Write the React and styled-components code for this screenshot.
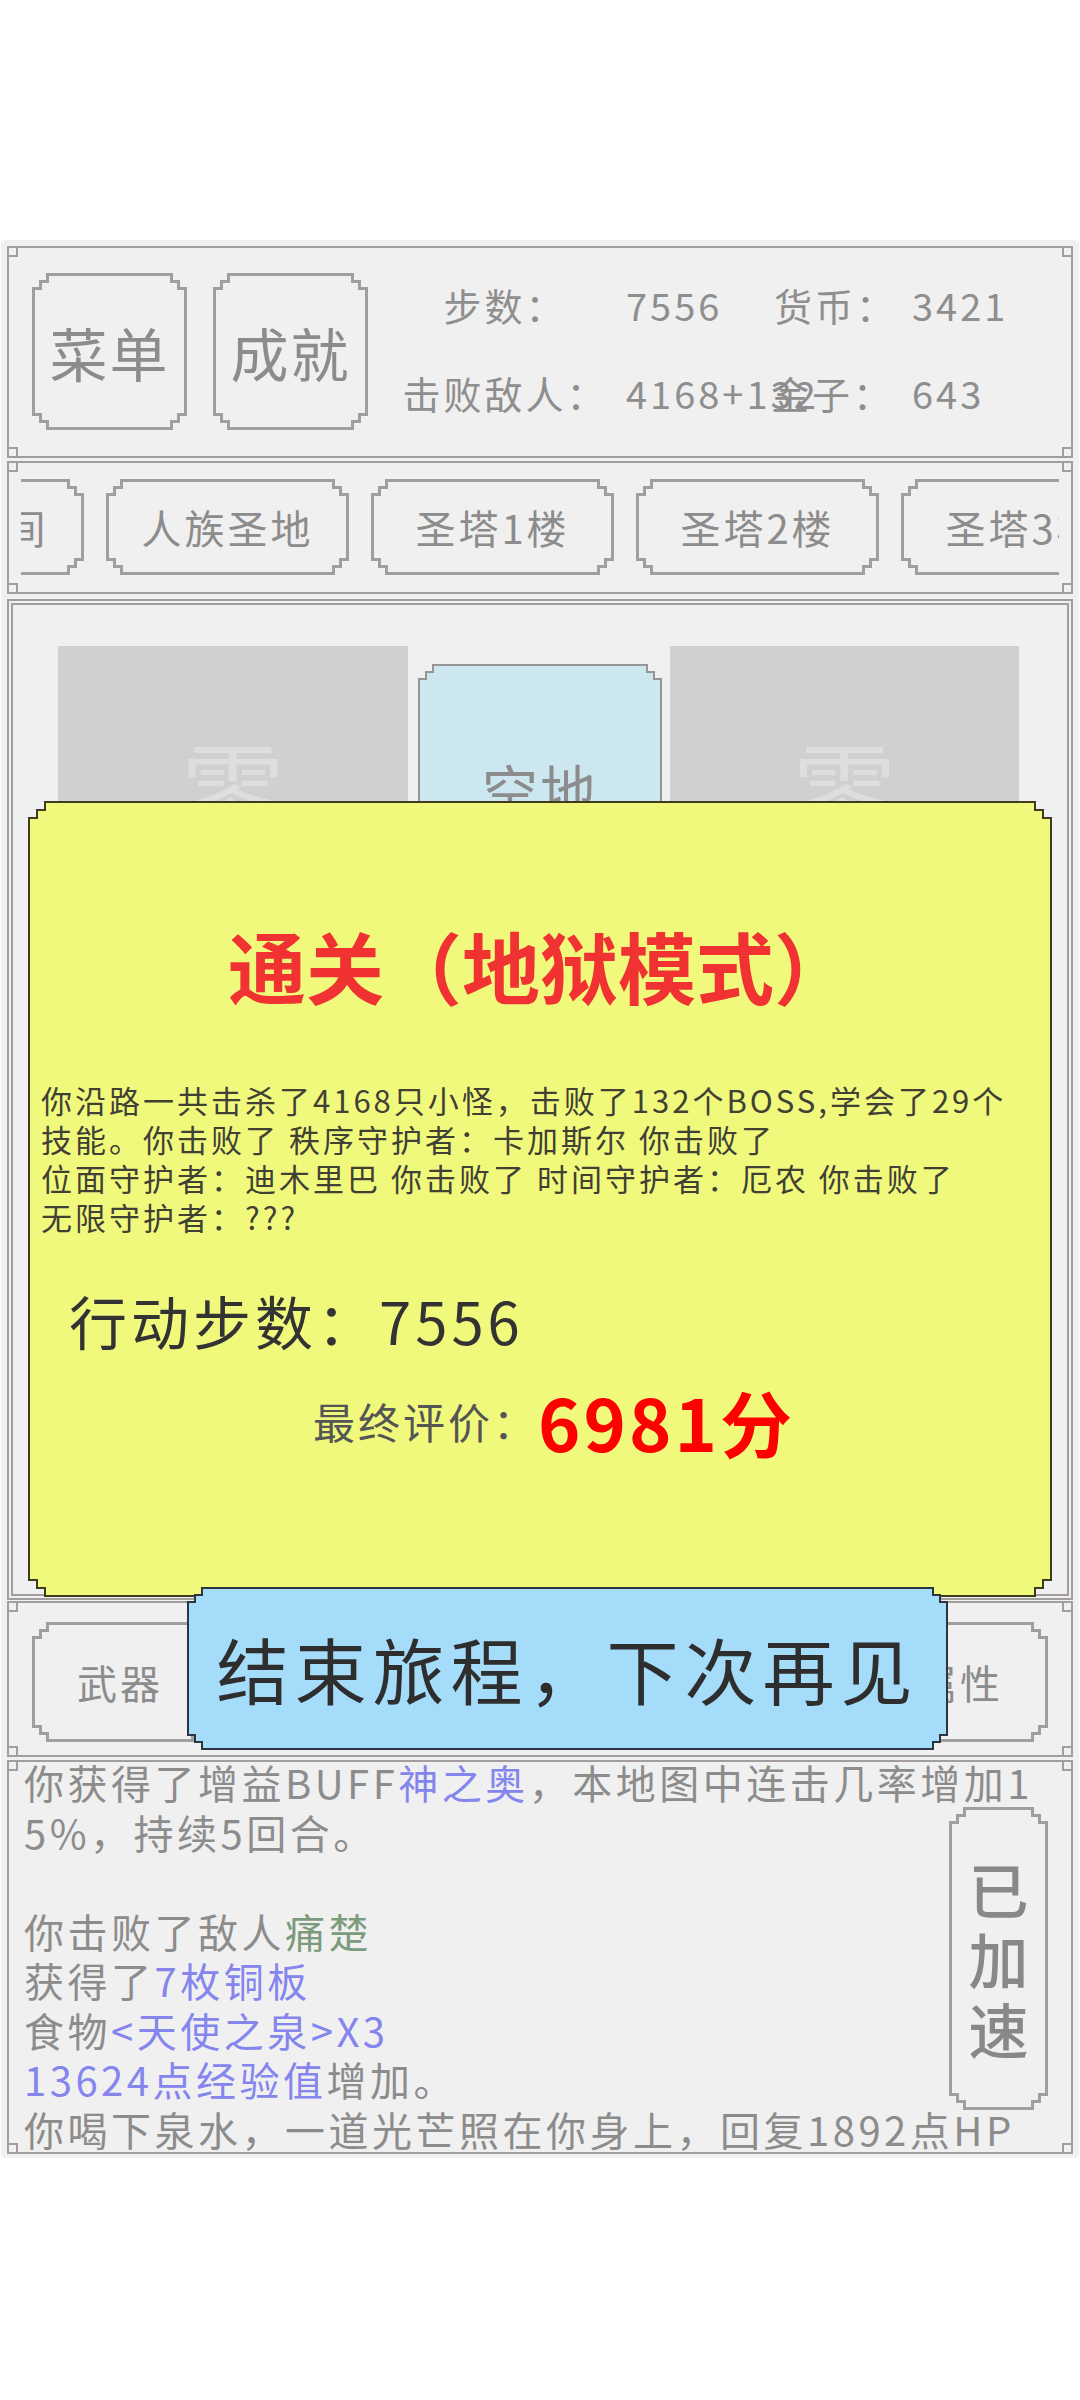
import React from "react";
import styled, { createGlobalStyle } from "styled-components";

const LINE = "#a29e9e";
const BG = "#f0f0f0";
const TEXT = "#8c8c8c";

const GlobalStyle = createGlobalStyle`
  html, body { margin: 0; padding: 0; background: #fff; }
  body { font-family: "Noto Sans CJK SC", "Noto Sans", sans-serif; }
  * { box-sizing: border-box; }
`;

// stepped corner outline, two steps of s px
const steps = (s) => `polygon(
  0 ${2 * s}px, ${s}px ${2 * s}px, ${s}px ${s}px, ${2 * s}px ${s}px, ${2 * s}px 0,
  calc(100% - ${2 * s}px) 0, calc(100% - ${2 * s}px) ${s}px, calc(100% - ${s}px) ${s}px, calc(100% - ${s}px) ${2 * s}px, 100% ${2 * s}px,
  100% calc(100% - ${2 * s}px), calc(100% - ${s}px) calc(100% - ${2 * s}px), calc(100% - ${s}px) calc(100% - ${s}px), calc(100% - ${2 * s}px) calc(100% - ${s}px), calc(100% - ${2 * s}px) 100%,
  ${2 * s}px 100%, ${2 * s}px calc(100% - ${s}px), ${s}px calc(100% - ${s}px), ${s}px calc(100% - ${2 * s}px), 0 calc(100% - ${2 * s}px)
)`;

const Notch = styled.div`
  flex: none;
  width: ${(p) => p.$w}px;
  height: ${(p) => p.$h}px;
  margin-top: ${(p) => p.$mt || 0}px;
  padding: ${(p) => p.$bw}px;
  background: ${(p) => p.$line};
  clip-path: ${(p) => steps(p.$s)};
`;

const NotchFill = styled.div`
  height: 100%;
  background: ${(p) => p.$fill};
  clip-path: ${(p) => steps(p.$s)};
`;

const CenterFace = styled(NotchFill)`
  display: flex;
  align-items: center;
  justify-content: center;
  white-space: nowrap;
  color: ${TEXT};
  font-size: ${(p) => p.$fs || 40}px;
  letter-spacing: ${(p) => p.$ls ?? 3}px;
`;

const NotchBox = ({ w, h, s = 7, bw = 3, line = LINE, fill = BG, mt, Face = CenterFace, fs, ls, children }) => (
  <Notch $w={w} $h={h} $s={s} $bw={bw} $line={line} $mt={mt}>
    <Face $s={s} $fill={fill} $fs={fs} $ls={ls}>
      {children}
    </Face>
  </Notch>
);

const Page = styled.div`
  position: relative;
  margin: 240px 1px 0;
  background: ${BG};
  border-radius: 4px;
  padding: 6px 6px 4px;
  display: flex;
  flex-direction: column;
`;

const Panel = styled.section`
  position: relative;
  flex: none;
  height: ${(p) => p.$h}px;
  margin-top: ${(p) => p.$mt || 0}px;
  border: 2px solid ${LINE};
`;

const Corner = styled.span`
  position: absolute;
  width: 11px;
  height: 11px;
  border: 2px solid ${LINE};
  ${(p) => (p.$top ? "top: -2px;" : "bottom: -2px;")}
  ${(p) => (p.$left ? "left: -2px;" : "right: -2px;")}
`;

const Corners = () => (
  <>
    <Corner $top $left />
    <Corner $top />
    <Corner $left />
    <Corner />
  </>
);

/* top bar */
const TopBar = styled.div`
  display: flex;
  align-items: flex-start;
  gap: 26px;
  padding: 25px 0 0 23px;
`;

const Stats = styled.div`
  display: grid;
  grid-template-columns: 220px 156px 141px auto;
  grid-auto-rows: 50px;
  row-gap: 38px;
  margin: 7px 0 0 1px;
  font-size: 38px;
  letter-spacing: 3px;
  line-height: 50px;
  color: #8e8e8e;
  white-space: nowrap;
`;

const StatCell = styled.span`
  text-align: ${(p) => (p.$center ? "center" : "left")};
  padding-left: ${(p) => p.$pl || 0}px;
`;

/* map tabs */
const TabStrip = styled.div`
  margin: 16px 12px 0;
  height: 96px;
  overflow: hidden;
`;

const TabTrack = styled.div`
  display: flex;
  gap: 22px;
  margin-left: -180px;
`;

/* map area */
const MapPanel = styled(Panel)`
  overflow: hidden;
  box-shadow: inset 0 0 0 2px ${BG}, inset 0 0 0 4px ${LINE};
`;

const MapRow = styled.div`
  display: flex;
  align-items: flex-start;
  padding: 45px 0 0 49px;
`;

const FogTile = styled.div`
  flex: none;
  width: ${(p) => p.$w}px;
  height: 300px;
  margin-right: ${(p) => p.$mr || 0}px;
  background: #d0d0d0;
  color: #dedede;
  font-size: 105px;
  display: flex;
  align-items: center;
  justify-content: center;
  padding-bottom: 22px;
`;

const TileGap = styled.div`
  flex: none;
  width: ${(p) => p.$w}px;
`;

/* gear row */
const GearRow = styled.div`
  display: flex;
  justify-content: space-between;
  padding: 19px 23px 0;
`;

/* log */
const LogText = styled.div`
  height: 100%;
  overflow: hidden;
  padding-left: 15px;
`;

const LogLines = styled.div`
  margin-top: -4px;
  font-size: 40px;
  letter-spacing: 3.5px;
  line-height: 49.5px;
  color: ${TEXT};
  white-space: nowrap;
`;

const Hl = styled.span`
  color: ${(p) => (p.$green ? "#7c9b7c" : "#8585ee")};
`;

const SpeedSpot = styled.div`
  position: absolute;
  top: 45px;
  right: 23px;
`;

const VerticalFace = styled(CenterFace)`
  flex-direction: column;
  line-height: 70px;
  font-size: 60px;
  font-weight: 500;
  color: #888;
  padding-bottom: 2px;
`;

/* overlay dialog */
const DialogSpot = styled.div`
  position: absolute;
  top: ${(p) => p.$top}px;
  left: ${(p) => p.$left}px;
`;

const DialogFace = styled(NotchFill)`
  padding-top: 112px;
  display: flex;
  flex-direction: column;
`;

const Title = styled.h1`
  margin: 0;
  font-size: 78px;
  font-weight: 700;
  line-height: 100px;
  text-align: center;
  color: #f03232;
`;

const Summary = styled.p`
  margin: 65px 0 0;
  padding: 0 11px;
  font-size: 31px;
  letter-spacing: 3px;
  line-height: 39px;
  color: #404035;
  white-space: nowrap;
`;

const StepsLine = styled.div`
  margin-top: 49px;
  padding-left: 39px;
  font-size: 58px;
  letter-spacing: 4px;
  line-height: 70px;
  color: #333;
`;

const ScoreRow = styled.div`
  margin-top: 25px;
  height: 80px;
  display: flex;
  align-items: center;
  padding-left: 283px;
  white-space: nowrap;
`;

const ScoreLabel = styled.span`
  font-size: 42px;
  letter-spacing: 3px;
  color: #555;
`;

const ScoreValue = styled.span`
  font-size: 72px;
  font-weight: 700;
  letter-spacing: 3px;
  color: #ff0000;
`;

const FarewellFace = styled(CenterFace)`
  color: #2e2e2e;
  padding-bottom: 2px;
`;

const tabs = ["时空之间", "人族圣地", "圣塔1楼", "圣塔2楼", "圣塔3楼"];
const gear = ["武器", "防具", "饰品", "技能", "属性"];

export default function App() {
  return (
    <>
      <GlobalStyle />
      <Page>
        <Panel $h={212}>
          <Corners />
          <TopBar>
            <NotchBox w={155} h={157} fs={58} ls={2}>菜单</NotchBox>
            <NotchBox w={155} h={157} fs={58} ls={2}>成就</NotchBox>
            <Stats>
              <StatCell $center>步数：</StatCell>
              <StatCell $pl={11}>7556</StatCell>
              <StatCell $pl={3}>货币：</StatCell>
              <StatCell>3421</StatCell>
              <StatCell $center>击败敌人：</StatCell>
              <StatCell $pl={11}>4168+132</StatCell>
              <StatCell $pl={0}>金子：</StatCell>
              <StatCell>643</StatCell>
            </Stats>
          </TopBar>
        </Panel>

        <Panel $h={133} $mt={3}>
          <Corners />
          <TabStrip>
            <TabTrack>
              {tabs.map((t) => (
                <NotchBox key={t} w={243} h={96} fs={40} ls={3}>
                  {t}
                </NotchBox>
              ))}
            </TabTrack>
          </TabStrip>
        </Panel>

        <MapPanel $h={1001} $mt={5}>
          <MapRow>
            <FogTile $w={350}>零</FogTile>
            <TileGap $w={10} />
            <NotchBox w={244} h={246} s={7} bw={2} line="#959595" fill="#cce7f0" mt={18} fs={56} ls={2}>
              空地
            </NotchBox>
            <TileGap $w={8} />
            <FogTile $w={349}>零</FogTile>
          </MapRow>
        </MapPanel>

        <Panel $h={156} $mt={1}>
          <Corners />
          <GearRow>
            {gear.map((g) => (
              <NotchBox key={g} w={176} h={120} fs={40} ls={3}>
                {g}
              </NotchBox>
            ))}
          </GearRow>
        </Panel>

        <Panel $h={394} $mt={3}>
          <Corners />
          <LogText>
            <LogLines>
              <div>
                你获得了增益BUFF<Hl>神之奥</Hl>，本地图中连击几率增加1
              </div>
              <div>5%，持续5回合。</div>
              <div>&nbsp;</div>
              <div>
                你击败了敌人<Hl $green>痛楚</Hl>
              </div>
              <div>
                获得了<Hl>7枚铜板</Hl>
              </div>
              <div>
                食物<Hl>&lt;天使之泉&gt;X3</Hl>
              </div>
              <div>
                <Hl>13624点经验值</Hl>增加。
              </div>
              <div>你喝下泉水，一道光芒照在你身上，回复1892点HP</div>
            </LogLines>
          </LogText>
          <SpeedSpot>
            <NotchBox w={99} h={303} Face={VerticalFace} ls={0}>
              <span>已</span>
              <span>加</span>
              <span>速</span>
            </NotchBox>
          </SpeedSpot>
        </Panel>

        <DialogSpot $top={561} $left={27}>
          <NotchBox w={1024} h={796} s={8} bw={2} line="#3e3b1f" fill="#f1f97d" Face={DialogFace}>
            <Title>通关（地狱模式）</Title>
            <Summary>
              你沿路一共击杀了4168只小怪，击败了132个BOSS,学会了29个
              <br />
              技能。你击败了 秩序守护者：卡加斯尔 你击败了
              <br />
              位面守护者：迪木里巴 你击败了 时间守护者：厄农 你击败了
              <br />
              无限守护者：???
            </Summary>
            <StepsLine>行动步数：7556</StepsLine>
            <ScoreRow>
              <ScoreLabel>最终评价：</ScoreLabel>
              <ScoreValue>6981分</ScoreValue>
            </ScoreRow>
          </NotchBox>
        </DialogSpot>

        <DialogSpot $top={1347} $left={186}>
          <NotchBox w={761} h={163} s={7} bw={2} line="#2c3642" fill="#a5dcfa" Face={FarewellFace} fs={72} ls={6}>
            结束旅程，下次再见
          </NotchBox>
        </DialogSpot>
      </Page>
    </>
  );
}
